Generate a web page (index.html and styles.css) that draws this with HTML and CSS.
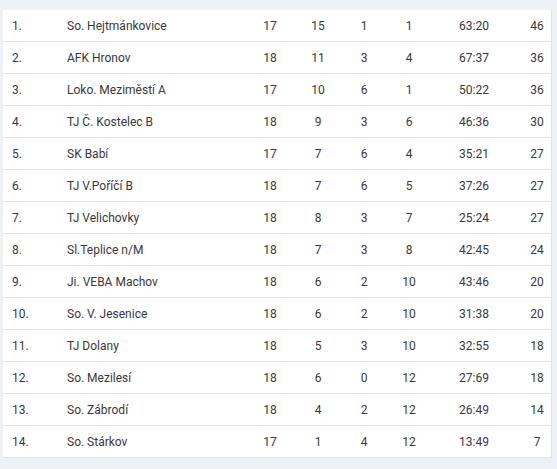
FILE: index.html
```html
<!DOCTYPE html>
<html lang="cs">
<head>
<meta charset="utf-8">
<link rel="stylesheet" href="styles.css">
</head>
<body>
<div class="page">
  <div class="table">
    <div class="row"><span class="rank">1.</span><span class="team">So. Hejtmánkovice</span><span class="num">17</span><span class="num">15</span><span class="num">1</span><span class="num">1</span><span class="score">63:20</span><span class="pts">46</span></div>
    <div class="row"><span class="rank">2.</span><span class="team">AFK Hronov</span><span class="num">18</span><span class="num">11</span><span class="num">3</span><span class="num">4</span><span class="score">67:37</span><span class="pts">36</span></div>
    <div class="row"><span class="rank">3.</span><span class="team">Loko. Meziměstí A</span><span class="num">17</span><span class="num">10</span><span class="num">6</span><span class="num">1</span><span class="score">50:22</span><span class="pts">36</span></div>
    <div class="row"><span class="rank">4.</span><span class="team">TJ Č. Kostelec B</span><span class="num">18</span><span class="num">9</span><span class="num">3</span><span class="num">6</span><span class="score">46:36</span><span class="pts">30</span></div>
    <div class="row"><span class="rank">5.</span><span class="team">SK Babí</span><span class="num">17</span><span class="num">7</span><span class="num">6</span><span class="num">4</span><span class="score">35:21</span><span class="pts">27</span></div>
    <div class="row"><span class="rank">6.</span><span class="team">TJ V.Poříčí B</span><span class="num">18</span><span class="num">7</span><span class="num">6</span><span class="num">5</span><span class="score">37:26</span><span class="pts">27</span></div>
    <div class="row"><span class="rank">7.</span><span class="team">TJ Velichovky</span><span class="num">18</span><span class="num">8</span><span class="num">3</span><span class="num">7</span><span class="score">25:24</span><span class="pts">27</span></div>
    <div class="row"><span class="rank">8.</span><span class="team">Sl.Teplice n/M</span><span class="num">18</span><span class="num">7</span><span class="num">3</span><span class="num">8</span><span class="score">42:45</span><span class="pts">24</span></div>
    <div class="row"><span class="rank">9.</span><span class="team">Ji. VEBA Machov</span><span class="num">18</span><span class="num">6</span><span class="num">2</span><span class="num">10</span><span class="score">43:46</span><span class="pts">20</span></div>
    <div class="row"><span class="rank">10.</span><span class="team">So. V. Jesenice</span><span class="num">18</span><span class="num">6</span><span class="num">2</span><span class="num">10</span><span class="score">31:38</span><span class="pts">20</span></div>
    <div class="row"><span class="rank">11.</span><span class="team">TJ Dolany</span><span class="num">18</span><span class="num">5</span><span class="num">3</span><span class="num">10</span><span class="score">32:55</span><span class="pts">18</span></div>
    <div class="row"><span class="rank">12.</span><span class="team">So. Mezilesí</span><span class="num">18</span><span class="num">6</span><span class="num">0</span><span class="num">12</span><span class="score">27:69</span><span class="pts">18</span></div>
    <div class="row"><span class="rank">13.</span><span class="team">So. Zábrodí</span><span class="num">18</span><span class="num">4</span><span class="num">2</span><span class="num">12</span><span class="score">26:49</span><span class="pts">14</span></div>
    <div class="row"><span class="rank">14.</span><span class="team">So. Stárkov</span><span class="num">17</span><span class="num">1</span><span class="num">4</span><span class="num">12</span><span class="score">13:49</span><span class="pts">7</span></div>
  </div>
</div>
</body>
</html>
```
FILE: styles.css
```css
html, body {
  margin: 0;
  padding: 0;
  background: #edf1f6;
}
body {
  font-family: Roboto, "Liberation Sans", sans-serif;
  font-size: 12px;
  color: #383838;
}
.page {
  padding: 10px 5px 13px 3px;
}
.table {
  background: #fff;
  border-right: 1px solid #dfe3e8;
  border-bottom: 1px solid #dfe3e8;
}
.row {
  display: grid;
  grid-template-columns: 64px 179px 48px 48px 44px 46px 84px 36px;
  height: 31px;
  align-items: center;
  border-bottom: 1px solid #e2e4e7;
}
.row:last-child {
  border-bottom: none;
}
.rank {
  padding-left: 9px;
}
.num, .score {
  text-align: center;
}
.pts {
  text-align: center;
  padding-left: 6px;
}
```
